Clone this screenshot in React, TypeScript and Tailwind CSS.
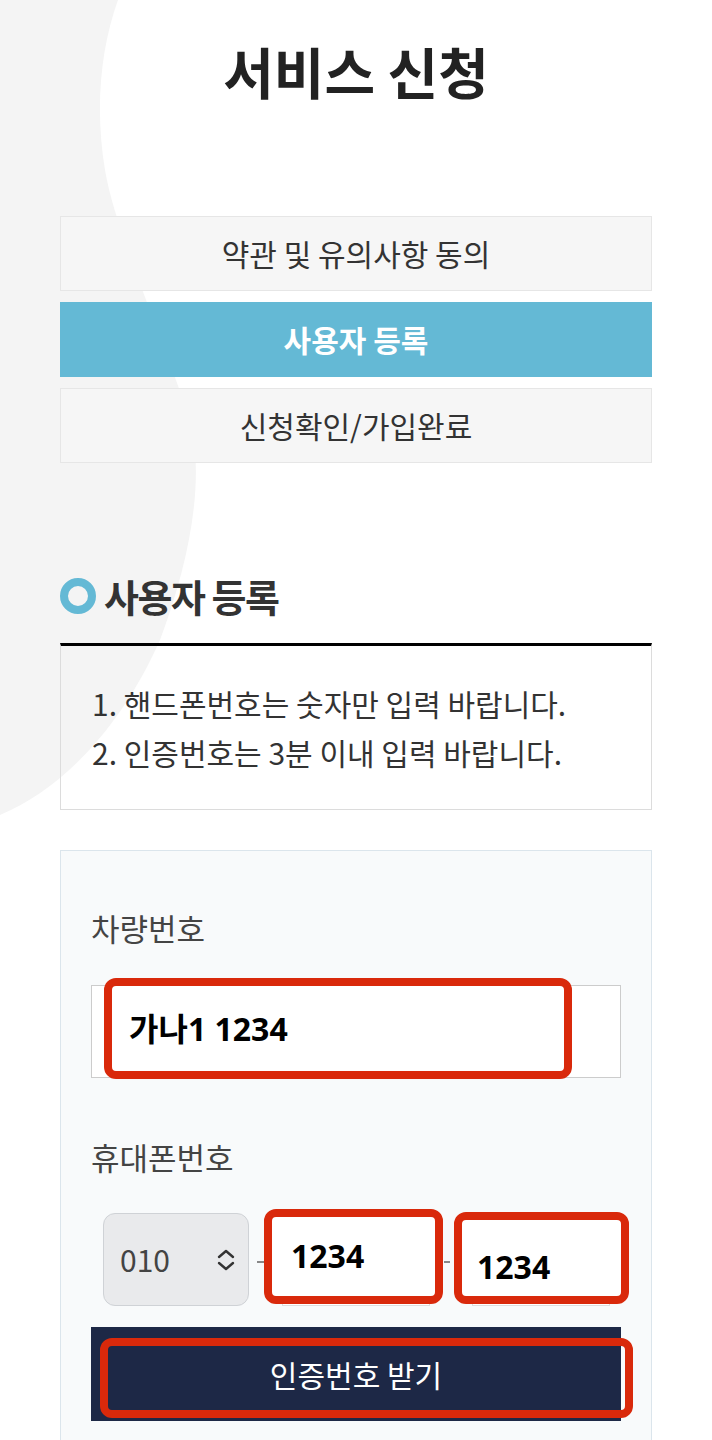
import React from "react";

const steps = [
  { label: "약관 및 유의사항 동의", active: false },
  { label: "사용자 등록", active: true },
  { label: "신청확인/가입완료", active: false },
];

function UpDown() {
  return (
    <svg width="20" height="24" viewBox="0 0 20 24" fill="none" stroke="#333" strokeWidth="2.4" strokeLinecap="round" strokeLinejoin="round">
      <path d="M3 9 L10 3 L17 9" />
      <path d="M3 15 L10 21 L17 15" />
    </svg>
  );
}

export default function App() {
  return (
    <div className="relative min-h-screen w-[712px] overflow-hidden bg-white font-['Noto_Sans_CJK_KR','Noto_Sans',sans-serif]">
      {/* background shape */}
      <svg className="pointer-events-none absolute left-0 top-0" width="712" height="900" viewBox="0 0 712 900">
        <path
          d="M0,0 L118,0 C100,50 95,110 105,170 C115,230 160,330 190,420 C205,480 190,560 160,640 C120,730 60,790 0,815 Z"
          fill="#f4f4f4"
        />
      </svg>

      <div className="relative px-[60px]">
        <h1 className="pt-[34px] text-center text-[55px] font-bold leading-[72px] text-[#222]">서비스 신청</h1>

        {/* steps */}
        <div className="mt-[110px] flex flex-col gap-[11px]">
          {steps.map((s) =>
            s.active ? (
              <div key={s.label} className="flex h-[75px] items-center justify-center bg-[#64b9d5] text-[30px] font-bold text-white">
                {s.label}
              </div>
            ) : (
              <div key={s.label} className="flex h-[75px] items-center justify-center border border-[#e6e6e6] bg-[#f6f6f6] text-[30px] text-[#333]">
                {s.label}
              </div>
            )
          )}
        </div>

        {/* section heading */}
        <div className="mt-[109px] flex items-center gap-[8px]">
          <span className="h-[36px] w-[36px] rounded-full border-[8px] border-[#64b9d5]" />
          <h2 className="text-[38px] font-bold leading-[48px] tracking-[-1.5px] text-[#333]">사용자 등록</h2>
        </div>

        {/* notice */}
        <div className="mt-[23px] border-x border-b border-t-[3px] border-x-[#dcdcdc] border-b-[#dcdcdc] border-t-black px-[31px] pb-[32px] pt-[33px] text-[30px] leading-[49px] text-[#333]">
          <p>1. 핸드폰번호는 숫자만 입력 바랍니다.</p>
          <p>2. 인증번호는 3분 이내 입력 바랍니다.</p>
        </div>

        {/* form */}
        <div className="mt-[40px] border border-[#dbe5ec] bg-[#f8fafb] px-[30px] pb-[40px] pt-[57px]">
          <label className="block text-[31px] leading-[40px] text-[#444]">차량번호</label>
          <div className="relative mt-[37px] h-[93px] border border-[#cccccc] bg-white">
            <div className="absolute left-[12px] top-[-8px] flex h-[101px] w-[468px] items-center rounded-[12px] border-[8px] border-[#d9290b] bg-white pl-[17px]">
              <span className="font-['Noto_Sans','Noto_Sans_CJK_KR',sans-serif] text-[32px] font-bold text-black">가나1 1234</span>
            </div>
          </div>

          <label className="mt-[59px] block text-[31px] leading-[40px] text-[#444]">휴대폰번호</label>
          <div className="mt-[36px] flex h-[93px] items-center pl-[12px]">
            <div className="flex h-[93px] w-[146px] items-center justify-between rounded-[12px] border border-[#cfd2d6] bg-[#e9eaec] pl-[16px] pr-[12px]">
              <span className="text-[30px] text-[#444]">010</span>
              <UpDown />
            </div>
            <span className="ml-[8px] mr-[17px] mt-[4px] h-[2px] w-[8px] bg-[#888]" />
            <div className="relative h-[93px] w-[148px] border border-[#dddddd] bg-white">
              <div className="absolute left-[-19px] top-[-5px] h-[95px] w-[179px] rounded-[12px] border-[8px] border-[#d9290b] bg-white">
                <span className="absolute left-[19px] top-[19px] font-['Noto_Sans','Noto_Sans_CJK_KR',sans-serif] text-[32px] font-bold leading-[40px] text-black">1234</span>
              </div>
            </div>
            <span className="ml-[14px] mr-[22px] mt-[4px] h-[2px] w-[6px] bg-[#888]" />
            <div className="relative h-[93px] w-[138px] border border-[#dddddd] bg-white">
              <div className="absolute left-[-19px] top-[-2px] h-[92px] w-[175px] rounded-[12px] border-[8px] border-[#d9290b] bg-white">
                <span className="absolute left-[15px] top-[27px] font-['Noto_Sans','Noto_Sans_CJK_KR',sans-serif] text-[32px] font-bold leading-[40px] text-black">1234</span>
              </div>
            </div>
          </div>

          <div className="relative mt-[21px] flex h-[94px] items-center justify-center bg-[#1d2846]">
            <div className="absolute left-[9px] right-[-12px] top-[11px] bottom-[3px] rounded-[12px] border-[8px] border-[#d9290b]" />
            <span className="relative text-[30px] text-white">인증번호 받기</span>
          </div>
        </div>
      </div>
    </div>
  );
}
